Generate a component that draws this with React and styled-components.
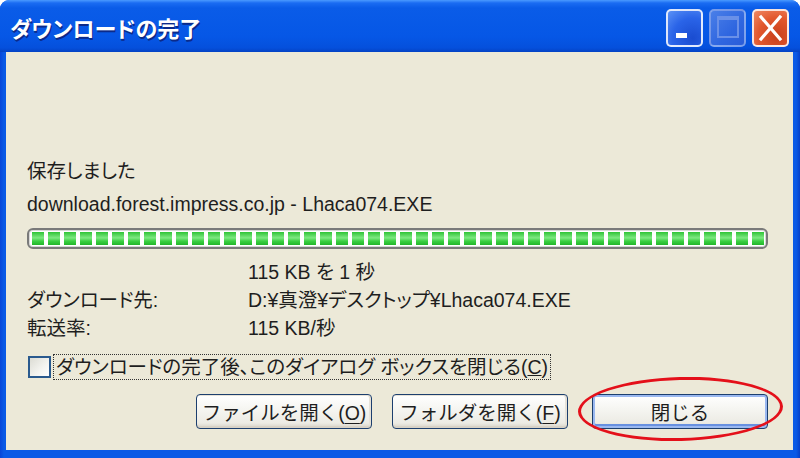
import React from 'react';
import styled, { createGlobalStyle } from 'styled-components';

const GlobalStyle = createGlobalStyle`
  html, body {
    margin: 0;
    padding: 0;
    background: #ffffff;
  }
  body {
    font-family: "Liberation Sans", "Noto Sans CJK JP", sans-serif;
    font-feature-settings: "palt";
  }
`;

const Window = styled.div`
  width: 800px;
  height: 458px;
  display: flex;
  flex-direction: column;
  border-radius: 9px 9px 0 0;
  overflow: hidden;
  background: linear-gradient(to right, #0846d8 0, #0a5ae6 4px, #0a5ae6 calc(100% - 4px), #0640c8 100%);
`;

const TitleBar = styled.header`
  height: 52px;
  flex: none;
  display: flex;
  align-items: center;
  justify-content: space-between;
  padding: 0 11px 0 10px;
  background: linear-gradient(to bottom, #4a9aff 0, #1a6cf2 3px, #0a5ce8 8px, #0657e6 70%, #0550dc 92%, #0442c4 100%);
  box-sizing: border-box;
`;

const Title = styled.h1`
  margin: 0;
  padding-top: 2px;
  color: #ffffff;
  font-size: 22px;
  font-weight: bold;
  text-shadow: 1px 2px 0 #0b2a8a;
`;

const Controls = styled.div`
  display: flex;
  gap: 6px;
  padding-top: 4px;
`;

const CaptionButton = styled.div`
  width: 37px;
  height: 38px;
  box-sizing: border-box;
  border-radius: 5px;
  border: 2px solid ${p => (p.$disabled ? 'rgba(255,255,255,0.35)' : 'rgba(255,255,255,0.85)')};
  background: ${p =>
    p.$close
      ? 'radial-gradient(circle at 70% 75%, #c8401c 0, #e2582e 55%, #f08a66 100%)'
      : p.$disabled
      ? 'linear-gradient(135deg, #4a7fe8 0, #2f66e0 60%, #2a5cd8 100%)'
      : 'radial-gradient(circle at 75% 80%, #1a4cd0 0, #2a64e8 55%, #5c92f6 100%)'};
  display: flex;
  align-items: center;
  justify-content: center;
`;

const Body = styled.main`
  flex: 1;
  margin: 0 7px 8px 6px;
  background: #ece9d8;
  padding: 103px 25px 0 21px;
  color: #1e1e1e;
  font-size: 19.5px;
`;

const Line = styled.div`
  line-height: 33px;
  white-space: nowrap;
`;

const Progress = styled.div`
  margin-top: 7px;
  height: 21px;
  box-sizing: border-box;
  border: 2px solid #7a7a7a;
  border-radius: 6px;
  background: #ffffff;
  padding: 2px 3px;
  display: flex;
  gap: 4px;
  overflow: hidden;
  box-shadow: inset 0 0 0 1px #d8d8d8;
`;

const Block = styled.span`
  flex: none;
  width: 12px;
  height: 13px;
  background: linear-gradient(to bottom, #2fc436 0, #7ee882 45%, #3bd043 70%, #21b52a 100%);
`;

const Details = styled.dl`
  margin: 7px 0 0 0;
  display: grid;
  grid-template-columns: 221px auto;
  grid-auto-rows: 28px;
  align-items: center;

  dt, dd {
    margin: 0;
    white-space: nowrap;
  }
`;

const CheckRow = styled.label`
  margin-top: 13px;
  height: 28px;
  display: flex;
  align-items: center;
  gap: 3px;
  margin-left: 1px;
`;

const Box = styled.span`
  width: 23px;
  height: 22px;
  box-sizing: border-box;
  border: 2px solid #2a5a8e;
  background: linear-gradient(135deg, #dcdcd4 0, #f4f4f0 60%, #ffffff 100%);
`;

const CheckText = styled.span`
  outline: 1px dotted #333;
  outline-offset: 0;
  padding: 0 2px;
  line-height: 24px;
  white-space: nowrap;
`;

const Buttons = styled.div`
  margin-top: 13px;
  display: flex;
  justify-content: flex-end;
  gap: 20px;
`;

const ButtonWrap = styled.div`
  position: relative;
  margin-left: ${p => p.$extra || 0}px;
`;

const Button = styled.button`
  width: 176px;
  height: 35px;
  box-sizing: border-box;
  border: 1.5px solid #1c3f6e;
  border-radius: 4px;
  font-family: inherit;
  font-size: 19.5px;
  color: #1e1e1e;
  background: linear-gradient(to bottom, #ffffff 0, #f6f6f2 40%, #ecebe4 85%, #d6d0c5 100%);
  box-shadow: ${p =>
    p.$default
      ? 'inset 0 0 0 2px #9ab8f0, inset 0 -2px 0 2px #6890e0'
      : 'inset 0 -2px 0 0 #d8d2c6, inset -1px 0 0 1px #e6e2d8'};
  padding: 0;
  cursor: pointer;

  u {
    text-underline-offset: 3px;
  }
`;

const Ring = styled.span`
  position: absolute;
  left: -14px;
  right: -15px;
  top: -17px;
  bottom: -12px;
  border: 3px solid #e4101a;
  border-radius: 50%;
  transform: rotate(-1.5deg);
  pointer-events: none;
`;

const MinimizeIcon = () => (
  <svg width="33" height="34" viewBox="0 0 33 34">
    <rect x="8" y="22" width="11" height="5" fill="#ffffff" />
  </svg>
);

const MaximizeIcon = () => (
  <svg width="33" height="34" viewBox="0 0 33 34">
    <rect x="7" y="6" width="20" height="20" fill="none" stroke="#6a90e8" strokeWidth="2" />
    <rect x="7" y="6" width="20" height="3" fill="#6a90e8" />
  </svg>
);

const CloseIcon = () => (
  <svg width="33" height="34" viewBox="0 0 33 34">
    <path d="M7 6 L26 28 M26 6 L7 28" stroke="#ffffff" strokeWidth="3.2" strokeLinecap="square" />
  </svg>
);

const blocks = Array.from({ length: 46 }, (_, i) => i);

export default function App() {
  return (
    <>
      <GlobalStyle />
      <Window>
        <TitleBar>
          <Title>ダウンロードの完了</Title>
          <Controls>
            <CaptionButton><MinimizeIcon /></CaptionButton>
            <CaptionButton $disabled><MaximizeIcon /></CaptionButton>
            <CaptionButton $close><CloseIcon /></CaptionButton>
          </Controls>
        </TitleBar>
        <Body>
          <Line>保存しました</Line>
          <Line>download.forest.impress.co.jp - Lhaca074.EXE</Line>
          <Progress>
            {blocks.map(i => <Block key={i} />)}
          </Progress>
          <Details>
            <dt></dt>
            <dd>115 KB を 1 秒</dd>
            <dt>ダウンロード先:</dt>
            <dd>D:¥真澄¥デスクトップ¥Lhaca074.EXE</dd>
            <dt>転送率:</dt>
            <dd>115 KB/秒</dd>
          </Details>
          <CheckRow>
            <Box />
            <CheckText>ダウンロードの完了後、このダイアログ ボックスを閉じる(<u>C</u>)</CheckText>
          </CheckRow>
          <Buttons>
            <ButtonWrap>
              <Button>ファイルを開く(<u>O</u>)</Button>
            </ButtonWrap>
            <ButtonWrap>
              <Button>フォルダを開く(<u>F</u>)</Button>
            </ButtonWrap>
            <ButtonWrap $extra={4}>
              <Button $default>閉じる</Button>
              <Ring />
            </ButtonWrap>
          </Buttons>
        </Body>
      </Window>
    </>
  );
}
